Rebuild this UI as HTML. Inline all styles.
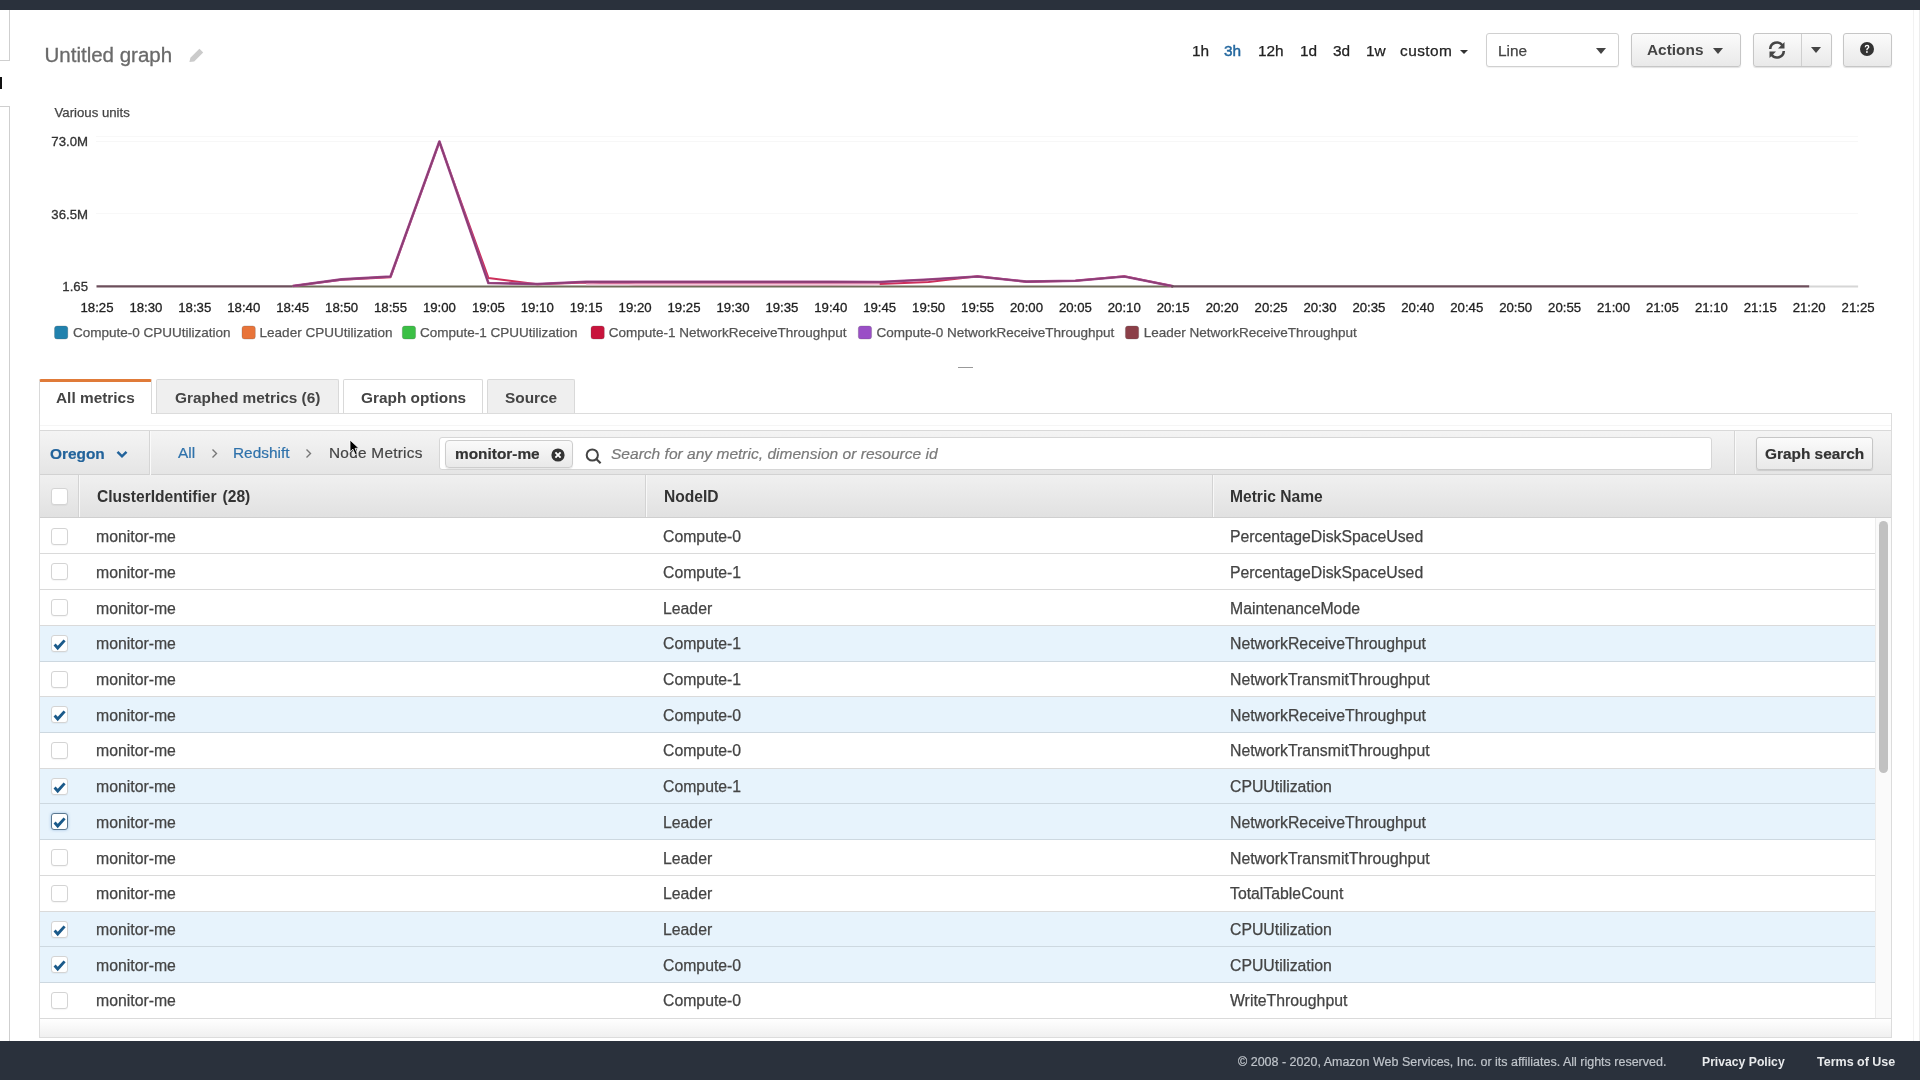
<!DOCTYPE html>
<html>
<head>
<meta charset="utf-8">
<style>
*{box-sizing:border-box;margin:0;padding:0}
html,body{width:1920px;height:1080px;overflow:hidden;background:#fff}
body{will-change:transform}
body{position:relative;font-family:"Liberation Sans",sans-serif;color:#444}
.a{position:absolute;white-space:nowrap}
#topbar{left:0;top:0;width:1920px;height:10px;background:#2a313c}
#footer{left:0;top:1041px;width:1920px;height:39px;background:#2a313c}
.btn{position:absolute;border:1px solid #c6c6c6;border-radius:3px;background:linear-gradient(#fbfbfb,#e9e9e9);box-shadow:0 1px 1px rgba(0,0,0,.12)}
.caret{position:absolute;width:0;height:0;border-left:5px solid transparent;border-right:5px solid transparent;border-top:6px solid #444}
.tab{position:absolute;border:1px solid #d9d9d9;border-bottom:none;border-radius:2px 2px 0 0;z-index:2}
.tt{font-size:15.4px;line-height:16px;font-weight:bold;color:#444;margin-top:-1px}
.tb{font-size:15.4px;line-height:16px;-webkit-text-stroke:0.2px currentColor}
.th{top:14px;font-size:15.6px;line-height:16px;font-weight:bold;color:#333}
.vd{top:0;width:1px;height:42px;background:#d3d3d3;box-shadow:1px 0 0 #f8f8f8}
.cb{width:17px;height:17px;background:#fff;border:1px solid #d4d4d4;border-radius:3px;box-shadow:0 1px 1px rgba(0,0,0,.04)}
.row{left:0;width:1835px;height:35.714px;border-bottom:1px solid #dadada;background:#fff}
.row.sel{background:#e7f3fc;border-bottom-color:#cdd8e0}
.row .cb{left:11px;top:9px}
.ck svg{position:absolute;left:-1px;top:-1px}
.cb.focus{border:1.5px solid #5b7890;box-shadow:0 0 3px rgba(80,140,200,.5)}
.td{top:10.4px;font-size:15.8px;line-height:16px;color:#444;-webkit-text-stroke:0.25px #444}
</style>
</head>
<body>
<div id="topbar" class="a"></div>

<!-- left collapsed nav -->
<div class="a" style="left:0;top:10px;width:10px;height:51px;border-right:1px solid #cfcfcf;border-bottom:1px solid #cfcfcf"></div>
<div class="a" style="left:0;top:77px;width:2px;height:12px;background:#111"></div>
<div class="a" style="left:0;top:106px;width:10px;height:935px;border-right:1px solid #cfcfcf;border-top:1px solid #cfcfcf"></div>
<div class="a" style="left:1913px;top:10px;width:1px;height:1031px;background:#f2f2f2"></div>
<div class="a" style="left:1919px;top:10px;width:1px;height:1031px;background:#ececec"></div>

<!-- title -->
<div class="a" id="title" style="left:44.5px;top:45px;font-size:20.5px;line-height:20px;color:#6a6a6a;-webkit-text-stroke:0.3px #6a6a6a">Untitled graph</div>
<svg class="a" style="left:188px;top:47px" width="16" height="16" viewBox="0 0 16 16"><path d="M1.4 15 L2.4 10.8 L11.4 1.8 L15.2 5.6 L6.2 14.6 Z" fill="#cbcbcb"/></svg>

<!-- time range -->
<div class="a" id="tr" style="top:43px;font-size:15.4px;line-height:16px;color:#222;-webkit-text-stroke:0.25px #222">
<span class="a" style="left:1192px">1h</span>
<span class="a" style="left:1224px;color:#22669e;-webkit-text-stroke:0.45px #22669e">3h</span>
<span class="a" style="left:1258px">12h</span>
<span class="a" style="left:1300px">1d</span>
<span class="a" style="left:1333px">3d</span>
<span class="a" style="left:1366px">1w</span>
<span class="a" style="left:1400px;letter-spacing:0.45px">custom</span>
</div>
<div class="caret" style="left:1460px;top:50px;border-left-width:4px;border-right-width:4px;border-top-width:4px;border-top-color:#333"></div>

<!-- Line select -->
<div class="a" style="left:1486px;top:33px;width:133px;height:34px;border:1px solid #d0d0d0;border-radius:3px;background:#fff;box-shadow:0 1px 1px rgba(0,0,0,.06)"></div>
<div class="a" style="left:1498px;top:43px;font-size:15.4px;line-height:16px;color:#444;-webkit-text-stroke:0.25px #444">Line</div>
<div class="caret" style="left:1596px;top:48px;border-top-color:#444"></div>

<!-- Actions -->
<div class="btn" style="left:1631px;top:33px;width:110px;height:34px"></div>
<div class="a" style="left:1647px;top:42px;font-size:15.4px;line-height:16px;font-weight:bold;color:#444">Actions</div>
<div class="caret" style="left:1713px;top:48px"></div>

<!-- refresh group -->
<div class="btn" style="left:1753px;top:33px;width:79px;height:34px"></div>
<div class="a" style="left:1801px;top:34px;width:1px;height:32px;background:#cfcfcf"></div>
<svg class="a" style="left:1767px;top:41px" width="20" height="18" viewBox="0 0 20 18">
<path d="M3.2 8 A6.8 6.8 0 0 1 15.4 4.2" fill="none" stroke="#444" stroke-width="2.6"/>
<path d="M17.5 1 L17.5 7.5 L11 7.5 Z" fill="#444"/>
<path d="M16.8 10 A6.8 6.8 0 0 1 4.6 13.8" fill="none" stroke="#444" stroke-width="2.6"/>
<path d="M2.5 17 L2.5 10.5 L9 10.5 Z" fill="#444"/>
</svg>
<div class="caret" style="left:1811px;top:47px"></div>

<!-- help -->
<div class="btn" style="left:1843px;top:33px;width:49px;height:34px"></div>
<svg class="a" style="left:1860px;top:42px" width="14" height="14" viewBox="0 0 14 14">
<circle cx="7" cy="7" r="7" fill="#333"/>
<path d="M4.6 5.2 Q4.8 2.8 7.1 2.8 Q9.4 2.9 9.4 4.9 Q9.4 6.1 8.2 6.8 Q7.6 7.2 7.6 8.3 L6.2 8.3 Q6.2 6.7 7.1 6.1 Q7.9 5.6 7.9 4.9 Q7.9 4.1 7.0 4.1 Q6.1 4.1 6.0 5.2 Z" fill="#fff"/>
<rect x="6.1" y="9.2" width="1.6" height="1.6" fill="#fff"/>
</svg>

<!-- CHART -->
<!--CHART--><svg class="a" style="left:0;top:0;font-family:'Liberation Sans',sans-serif" width="1920" height="380" viewBox="0 0 1920 380">
<line x1="96" y1="136.5" x2="1858" y2="136.5" stroke="#f8f8f8" stroke-width="1"/>
<line x1="96" y1="141.5" x2="1858" y2="141.5" stroke="#f7f7f7" stroke-width="1"/>
<line x1="96" y1="213.5" x2="1858" y2="213.5" stroke="#f8f8f8" stroke-width="1"/>
<g font-size="13.2" fill="#333" stroke="#333" stroke-width="0.3" text-anchor="end">
<text x="88" y="146">73.0M</text><text x="88" y="219">36.5M</text><text x="88" y="290.5">1.65</text>
</g>
<text x="54.5" y="117" font-size="13.2" fill="#444" stroke="#444" stroke-width="0.25">Various units</text>
<g font-size="13.2" fill="#222" stroke="#222" stroke-width="0.3" text-anchor="middle">
<text x="97.0" y="311.7">18:25</text>
<text x="145.9" y="311.7">18:30</text>
<text x="194.8" y="311.7">18:35</text>
<text x="243.8" y="311.7">18:40</text>
<text x="292.7" y="311.7">18:45</text>
<text x="341.6" y="311.7">18:50</text>
<text x="390.5" y="311.7">18:55</text>
<text x="439.4" y="311.7">19:00</text>
<text x="488.4" y="311.7">19:05</text>
<text x="537.3" y="311.7">19:10</text>
<text x="586.2" y="311.7">19:15</text>
<text x="635.1" y="311.7">19:20</text>
<text x="684.0" y="311.7">19:25</text>
<text x="733.0" y="311.7">19:30</text>
<text x="781.9" y="311.7">19:35</text>
<text x="830.8" y="311.7">19:40</text>
<text x="879.7" y="311.7">19:45</text>
<text x="928.6" y="311.7">19:50</text>
<text x="977.6" y="311.7">19:55</text>
<text x="1026.5" y="311.7">20:00</text>
<text x="1075.4" y="311.7">20:05</text>
<text x="1124.3" y="311.7">20:10</text>
<text x="1173.2" y="311.7">20:15</text>
<text x="1222.2" y="311.7">20:20</text>
<text x="1271.1" y="311.7">20:25</text>
<text x="1320.0" y="311.7">20:30</text>
<text x="1368.9" y="311.7">20:35</text>
<text x="1417.8" y="311.7">20:40</text>
<text x="1466.8" y="311.7">20:45</text>
<text x="1515.7" y="311.7">20:50</text>
<text x="1564.6" y="311.7">20:55</text>
<text x="1613.5" y="311.7">21:00</text>
<text x="1662.4" y="311.7">21:05</text>
<text x="1711.4" y="311.7">21:10</text>
<text x="1760.3" y="311.7">21:15</text>
<text x="1809.2" y="311.7">21:20</text>
<text x="1858.1" y="311.7">21:25</text>
</g>
<line x1="1809.2" y1="286.4" x2="1858.1" y2="286.4" stroke="#d6d6d6" stroke-width="2"/>
<line x1="292.7" y1="286.5" x2="1173.2" y2="286.5" stroke="#6f6b58" stroke-width="2.2"/>
<path d="M292.7,286.0 L341.6,279.8 L390.5,277.2 L439.4,142.0 L488.4,277.9 L537.3,284.3 L586.2,282.6 L635.1,284.2 L684.0,284.2 L733.0,284.2 L781.9,284.2 L830.8,284.2 L879.7,284.0 L928.6,282.0 L977.6,276.3 L1026.5,281.8 L1075.4,280.8 L1124.3,276.3 L1173.2,286.3" fill="none" stroke="#cc2f5a" stroke-width="2" stroke-linejoin="round"/>
<line x1="586.2" y1="284.3" x2="879.7" y2="284.3" stroke="#f6c6dc" stroke-width="1.8"/>
<path d="M292.7,286.0 L341.6,279.4 L390.5,276.5 L439.4,141.5 L488.4,283.0 L537.3,284.0 L586.2,281.8 L635.1,281.9 L684.0,281.9 L733.0,281.9 L781.9,281.9 L830.8,281.9 L879.7,282.0 L928.6,279.5 L977.6,276.5 L1026.5,281.6 L1075.4,280.8 L1124.3,276.5 L1173.2,286.3" fill="none" stroke="#ab4f98" stroke-width="2.6" stroke-linejoin="round"/>
<path d="M292.7,286.0 L341.6,279.4 L390.5,276.5 L439.4,141.5 L488.4,283.0 L537.3,284.0 L586.2,281.8 L635.1,281.9 L684.0,281.9 L733.0,281.9 L781.9,281.9 L830.8,281.9 L879.7,282.0 L928.6,279.5 L977.6,276.5 L1026.5,281.6 L1075.4,280.8 L1124.3,276.5 L1173.2,286.3" fill="none" stroke="#8a3e72" stroke-width="1.6" stroke-linejoin="round"/>
<line x1="96.5" y1="286.4" x2="292.7" y2="286.4" stroke="#6c4e5b" stroke-width="2.4"/>
<line x1="1171.2" y1="286.4" x2="1809.2" y2="286.4" stroke="#6c4e5b" stroke-width="2.4"/>
<g font-size="13.5" fill="#555" stroke="#555" stroke-width="0.25">
<rect x="54.5" y="326" width="13.3" height="13" rx="2.5" fill="#2181ad"/><text x="73" y="337.4">Compute-0 CPUUtilization</text>
<rect x="242" y="326" width="13.3" height="13" rx="2.5" fill="#e8743a"/><text x="259.6" y="337.4">Leader CPUUtilization</text>
<rect x="402.3" y="326" width="13.3" height="13" rx="2.5" fill="#3bbf45"/><text x="420" y="337.4">Compute-1 CPUUtilization</text>
<rect x="591" y="326" width="13.3" height="13" rx="2.5" fill="#c8143c"/><text x="608.7" y="337.4">Compute-1 NetworkReceiveThroughput</text>
<rect x="858.3" y="326" width="13.3" height="13" rx="2.5" fill="#9a4fc6"/><text x="876.5" y="337.4">Compute-0 NetworkReceiveThroughput</text>
<rect x="1125.4" y="326" width="13.3" height="13" rx="2.5" fill="#8b3f48"/><text x="1143.7" y="337.4">Leader NetworkReceiveThroughput</text>
</g>
<line x1="958" y1="367.5" x2="973" y2="367.5" stroke="#999" stroke-width="1"/>
</svg><!--/CHART-->

<!-- TABS & PANEL -->
<!--PANEL-->
<div class="a tab" style="left:39px;top:379px;width:113px;height:35px;background:#fff;border-top:3px solid #e07b39;border-bottom:none;z-index:3"><span class="a tt" style="left:16px;top:9px">All metrics</span></div>
<div class="a tab" style="left:156px;top:379px;width:183px;height:34px;background:#efefef"><span class="a tt" style="left:18px;top:11px">Graphed metrics (6)</span></div>
<div class="a tab" style="left:343px;top:379px;width:140px;height:34px;background:#fff"><span class="a tt" style="left:17px;top:11px">Graph options</span></div>
<div class="a tab" style="left:487px;top:379px;width:88px;height:34px;background:#efefef"><span class="a tt" style="left:17px;top:11px">Source</span></div>
<div class="a" id="panelbox" style="left:39px;top:413px;width:1853px;height:625px;border:1px solid #dcdcdc;background:#fff;z-index:1"></div>
<div class="a" style="left:40px;top:425px;width:1851px;height:1px;background:#f5f5f5;z-index:2"></div>
<div class="a" style="left:40px;top:1018px;width:1851px;height:19px;background:linear-gradient(#fff,#f0f0f0);border-top:1px solid #dedede;z-index:2"></div>


<div class="a" id="toolbar" style="left:40px;top:430px;width:1851px;height:45px;background:linear-gradient(#f4f4f4,#e5e5e5);border-top:1px solid #d9d9d9;border-bottom:1px solid #d2d2d2;z-index:2">
<span class="a tb" style="left:10px;top:15px;font-weight:bold;color:#22639b">Oregon</span>
<svg class="a" style="left:76px;top:19px" width="12" height="9" viewBox="0 0 12 9"><path d="M1.5 1.8 L6 6.3 L10.5 1.8" fill="none" stroke="#22639b" stroke-width="2.5"/></svg>
<div class="a" style="left:109px;top:0;width:1px;height:44px;background:#d5d5d5;box-shadow:1px 0 0 #fafafa"></div>
<span class="a tb" style="left:138px;top:14px;color:#2f72ab">All</span>
<svg class="a" style="left:171px;top:17px" width="8" height="11" viewBox="0 0 8 11"><path d="M1.5 1.5 L5.5 5.5 L1.5 9.5" fill="none" stroke="#777" stroke-width="1.4"/></svg>
<span class="a tb" style="left:193px;top:14px;color:#2f72ab">Redshift</span>
<svg class="a" style="left:265px;top:17px" width="8" height="11" viewBox="0 0 8 11"><path d="M1.5 1.5 L5.5 5.5 L1.5 9.5" fill="none" stroke="#777" stroke-width="1.4"/></svg>
<span class="a tb" style="left:289px;top:14px;color:#444;letter-spacing:0.25px">Node Metrics</span>
<div class="a" style="left:399px;top:6px;width:1273px;height:33px;background:#fff;border:1px solid #d6d6d6;border-radius:3px"></div>
<div class="a" style="left:405px;top:9px;width:128px;height:28px;background:linear-gradient(#fafafa,#e9e9e9);border:1px solid #cdcdcd;border-radius:4px;box-shadow:0 1px 1px rgba(0,0,0,.1)"></div>
<span class="a tb" style="left:415px;top:15px;font-weight:bold;color:#333">monitor-me</span>
<svg class="a" style="left:511px;top:17px" width="14" height="14" viewBox="0 0 14 14"><circle cx="7" cy="7" r="6.6" fill="#333"/><path d="M4.4 4.4 L9.6 9.6 M9.6 4.4 L4.4 9.6" stroke="#fff" stroke-width="1.9"/></svg>
<svg class="a" style="left:545px;top:17px" width="18" height="17" viewBox="0 0 18 17"><circle cx="7.3" cy="7" r="5.6" fill="none" stroke="#444" stroke-width="2"/><path d="M11.3 11 L15.6 15.3" stroke="#444" stroke-width="2.2"/></svg>
<span class="a tb" style="left:571px;top:15px;font-style:italic;color:#7a7a7a;font-size:15.55px">Search for any metric, dimension or resource id</span>
<div class="a" style="left:1694px;top:0;width:1px;height:43px;background:#d5d5d5;box-shadow:1px 0 0 #fafafa"></div>
<div class="btn" style="left:1716px;top:6px;width:117px;height:33px"></div>
<span class="a tb" style="left:1725px;top:15px;font-weight:bold;color:#333">Graph search</span>
</div>

<svg class="a" style="left:0;top:0;z-index:9" width="400" height="470" viewBox="0 0 400 470"><path d="M350 440 L350 451.8 L352.9 449.2 L355.2 454.6 L357.3 453.7 L355.1 448.4 L358.8 448.2 Z" fill="#000" stroke="#fff" stroke-width="0.8" stroke-linejoin="round"/></svg>

<div class="a" id="thead" style="left:40px;top:475px;width:1851px;height:43px;background:linear-gradient(#f0f0f0,#e1e1e1);border-bottom:1px solid #cfcfcf;z-index:2">
<div class="a cb" style="left:11px;top:13px"></div>
<div class="a vd" style="left:38px"></div>
<span class="a th" style="left:57px">ClusterIdentifier<span style="margin-left:6px">(28)</span></span>
<div class="a vd" style="left:605px"></div>
<span class="a th" style="left:624px">NodeID</span>
<div class="a vd" style="left:1172px"></div>
<span class="a th" style="left:1190px">Metric Name</span>
</div>

<div class="a" id="tbody" style="left:40px;top:518.7px;width:1835px;height:500px;z-index:2">
<div class="a row" style="top:0.000px"><div class="a cb"></div><span class="a td" style="left:56px">monitor-me</span><span class="a td" style="left:623px">Compute-0</span><span class="a td" style="left:1190px">PercentageDiskSpaceUsed</span></div>
<div class="a row" style="top:35.720px"><div class="a cb"></div><span class="a td" style="left:56px">monitor-me</span><span class="a td" style="left:623px">Compute-1</span><span class="a td" style="left:1190px">PercentageDiskSpaceUsed</span></div>
<div class="a row" style="top:71.440px"><div class="a cb"></div><span class="a td" style="left:56px">monitor-me</span><span class="a td" style="left:623px">Leader</span><span class="a td" style="left:1190px">MaintenanceMode</span></div>
<div class="a row sel" style="top:107.160px"><div class="a cb ck"><svg width="17" height="17" viewBox="0 0 17 17"><path d="M3.6 9.6 L6.7 13 L13.6 5.4" fill="none" stroke="#1b5a8a" stroke-width="2.9" stroke-linecap="butt" stroke-linejoin="miter"/></svg></div><span class="a td" style="left:56px">monitor-me</span><span class="a td" style="left:623px">Compute-1</span><span class="a td" style="left:1190px">NetworkReceiveThroughput</span></div>
<div class="a row" style="top:142.880px"><div class="a cb"></div><span class="a td" style="left:56px">monitor-me</span><span class="a td" style="left:623px">Compute-1</span><span class="a td" style="left:1190px">NetworkTransmitThroughput</span></div>
<div class="a row sel" style="top:178.600px"><div class="a cb ck"><svg width="17" height="17" viewBox="0 0 17 17"><path d="M3.6 9.6 L6.7 13 L13.6 5.4" fill="none" stroke="#1b5a8a" stroke-width="2.9" stroke-linecap="butt" stroke-linejoin="miter"/></svg></div><span class="a td" style="left:56px">monitor-me</span><span class="a td" style="left:623px">Compute-0</span><span class="a td" style="left:1190px">NetworkReceiveThroughput</span></div>
<div class="a row" style="top:214.320px"><div class="a cb"></div><span class="a td" style="left:56px">monitor-me</span><span class="a td" style="left:623px">Compute-0</span><span class="a td" style="left:1190px">NetworkTransmitThroughput</span></div>
<div class="a row sel" style="top:250.040px"><div class="a cb ck"><svg width="17" height="17" viewBox="0 0 17 17"><path d="M3.6 9.6 L6.7 13 L13.6 5.4" fill="none" stroke="#1b5a8a" stroke-width="2.9" stroke-linecap="butt" stroke-linejoin="miter"/></svg></div><span class="a td" style="left:56px">monitor-me</span><span class="a td" style="left:623px">Compute-1</span><span class="a td" style="left:1190px">CPUUtilization</span></div>
<div class="a row sel" style="top:285.760px"><div class="a cb ck focus"><svg width="17" height="17" viewBox="0 0 17 17"><path d="M3.6 9.6 L6.7 13 L13.6 5.4" fill="none" stroke="#1b5a8a" stroke-width="2.9" stroke-linecap="butt" stroke-linejoin="miter"/></svg></div><span class="a td" style="left:56px">monitor-me</span><span class="a td" style="left:623px">Leader</span><span class="a td" style="left:1190px">NetworkReceiveThroughput</span></div>
<div class="a row" style="top:321.480px"><div class="a cb"></div><span class="a td" style="left:56px">monitor-me</span><span class="a td" style="left:623px">Leader</span><span class="a td" style="left:1190px">NetworkTransmitThroughput</span></div>
<div class="a row" style="top:357.200px"><div class="a cb"></div><span class="a td" style="left:56px">monitor-me</span><span class="a td" style="left:623px">Leader</span><span class="a td" style="left:1190px">TotalTableCount</span></div>
<div class="a row sel" style="top:392.920px"><div class="a cb ck"><svg width="17" height="17" viewBox="0 0 17 17"><path d="M3.6 9.6 L6.7 13 L13.6 5.4" fill="none" stroke="#1b5a8a" stroke-width="2.9" stroke-linecap="butt" stroke-linejoin="miter"/></svg></div><span class="a td" style="left:56px">monitor-me</span><span class="a td" style="left:623px">Leader</span><span class="a td" style="left:1190px">CPUUtilization</span></div>
<div class="a row sel" style="top:428.640px"><div class="a cb ck"><svg width="17" height="17" viewBox="0 0 17 17"><path d="M3.6 9.6 L6.7 13 L13.6 5.4" fill="none" stroke="#1b5a8a" stroke-width="2.9" stroke-linecap="butt" stroke-linejoin="miter"/></svg></div><span class="a td" style="left:56px">monitor-me</span><span class="a td" style="left:623px">Compute-0</span><span class="a td" style="left:1190px">CPUUtilization</span></div>
<div class="a row" style="top:464.360px"><div class="a cb"></div><span class="a td" style="left:56px">monitor-me</span><span class="a td" style="left:623px">Compute-0</span><span class="a td" style="left:1190px">WriteThroughput</span></div>
</div>
<div class="a" style="left:1875px;top:518px;width:16px;height:500px;background:#fafafa;border-left:1px solid #ececec;z-index:2"></div>
<div class="a" style="left:1879px;top:521px;width:9px;height:252px;background:#c1c1c1;border-radius:4.5px;z-index:3"></div><!--/PANEL-->

<div id="footer" class="a">
<div class="a" style="left:1238px;top:14px;font-size:12.5px;line-height:14px;color:#bfc4ca;-webkit-text-stroke:0.2px #bfc4ca">© 2008 - 2020, Amazon Web Services, Inc. or its affiliates. All rights reserved.</div>
<div class="a" style="left:1702px;top:14px;font-size:12.2px;line-height:14px;color:#e8eaec;font-weight:bold">Privacy Policy</div>
<div class="a" style="left:1817px;top:14px;font-size:12.5px;line-height:14px;color:#e8eaec;font-weight:bold">Terms of Use</div>
</div>
</body>
</html>
